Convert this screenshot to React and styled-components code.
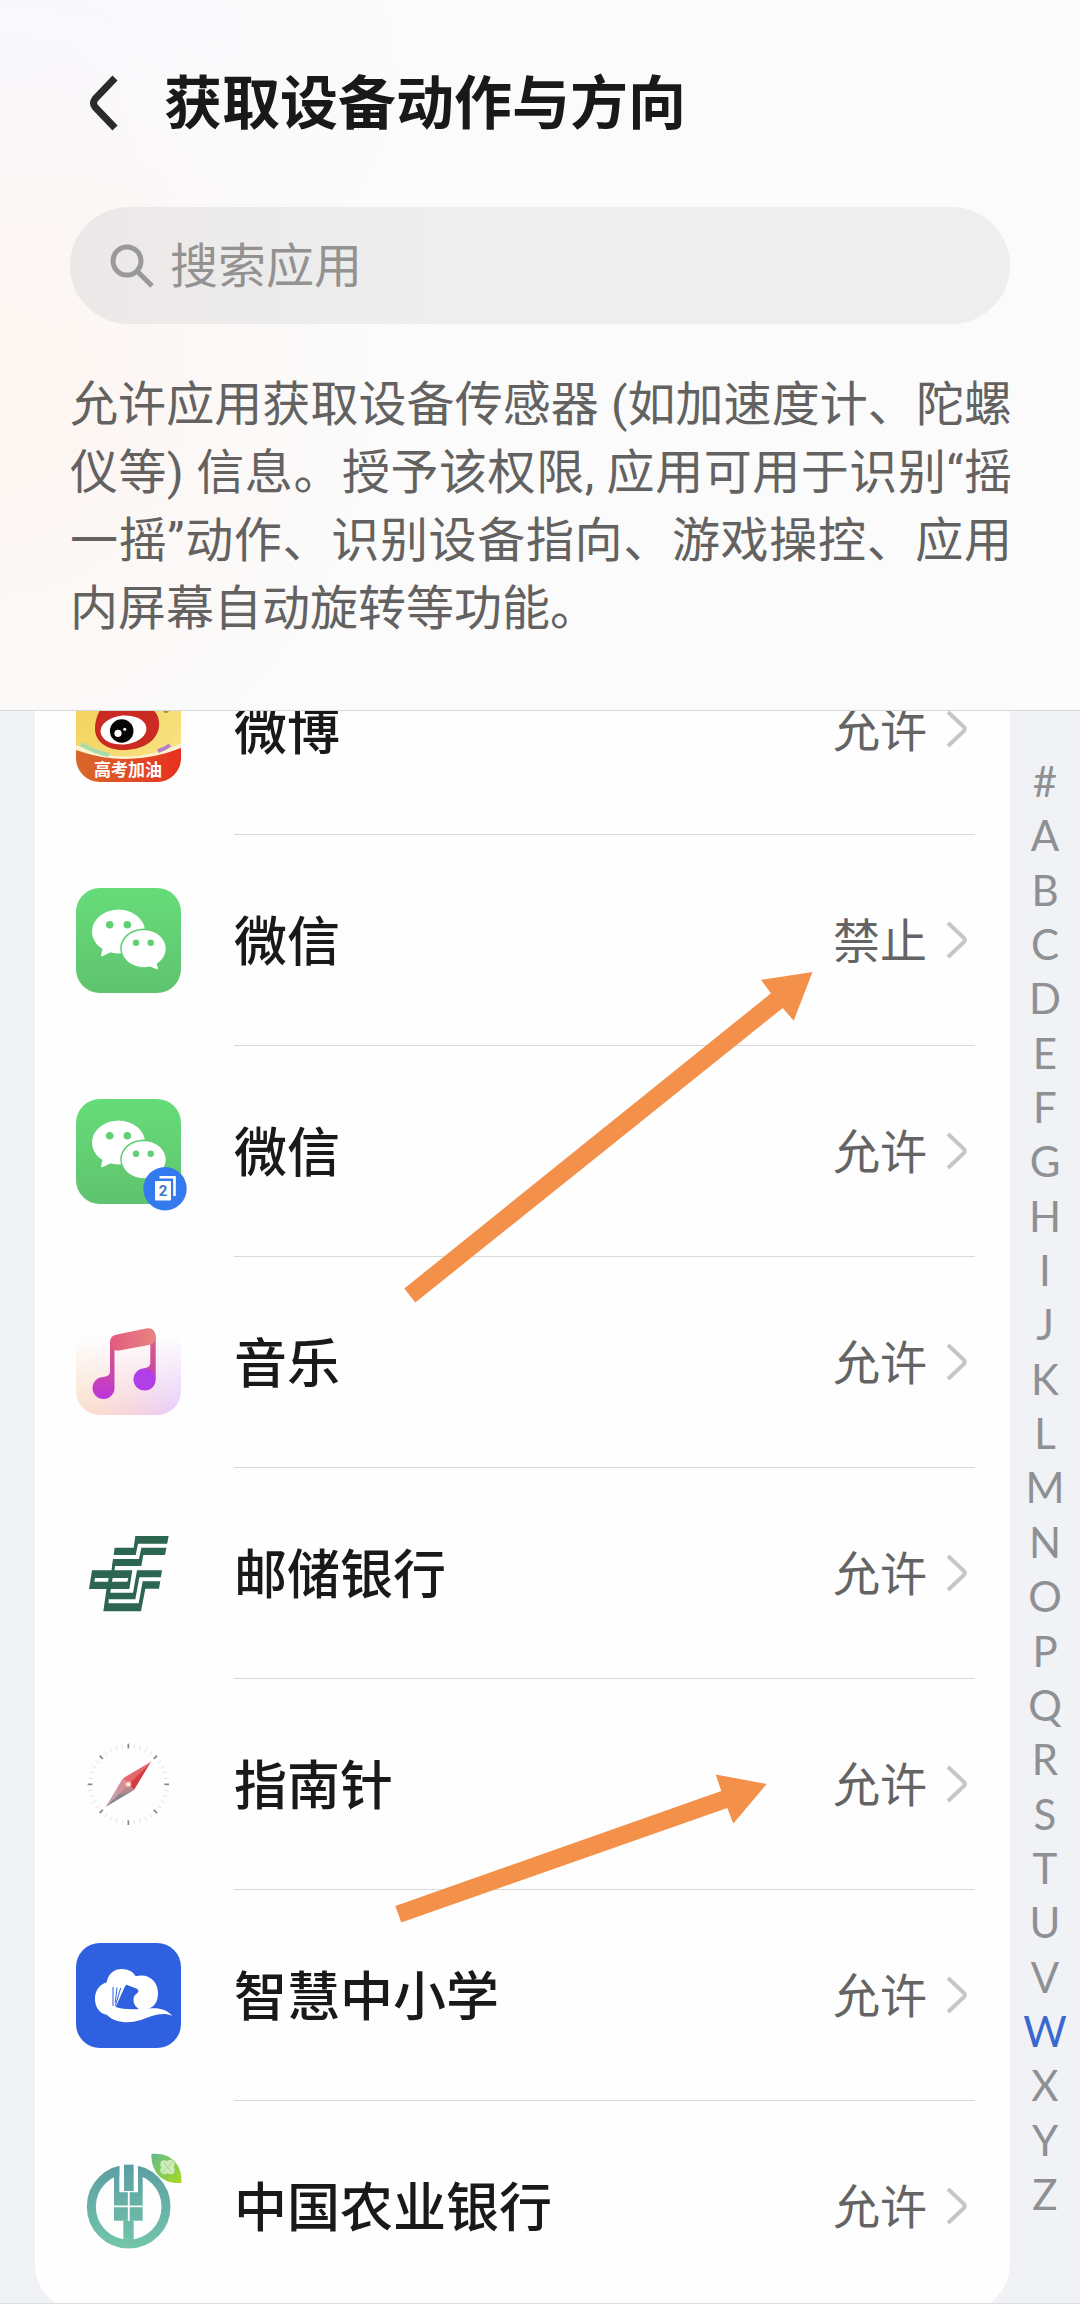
import React, { useLayoutEffect, useRef } from 'react';
import styled, { createGlobalStyle } from 'styled-components';

const GlobalStyle = createGlobalStyle`
  * {
    box-sizing: border-box;
  }

  body {
    margin: 0;
    background: #f0f2f6;
    font-family: Roboto, 'Noto Sans CJK SC', sans-serif;
    color: #191919;
  }
`;

const Page = styled.div`
  display: flex;
  flex-direction: column;
  height: 100vh;
  border-bottom: 1px solid #dcdde0;
`;

const Header = styled.header`
  padding: 64px 68px 67px 70px;
  border-bottom: 1px solid #d6d7d9;
  background:
    radial-gradient(ellipse 380px 420px at 0 55%, #fdf5f1, transparent),
    radial-gradient(ellipse 420px 300px at 0 10%, #f8f8fd, transparent),
    #fbfbfb;
`;

const TitleRow = styled.div`
  display: flex;
  align-items: center;
  gap: 44px;
  height: 78px;
  margin-bottom: 65px;
`;

const BackButton = styled.button`
  display: flex;
  padding: 0 0 0 16px;
  border: none;
  background: none;
  cursor: pointer;
`;

const Title = styled.h1`
  margin: 0;
  padding-top: 2px;
  font-size: 58px;
  line-height: 76px;
  font-weight: 700;
`;

const SearchBox = styled.label`
  display: flex;
  align-items: center;
  gap: 16px;
  height: 117px;
  margin-right: 2px;
  padding: 0 38px;
  border-radius: 59px;
  background: linear-gradient(90deg, #ebe9e8, #eeeeee 40%);
`;

const SearchInput = styled.input`
  flex: 1;
  min-width: 0;
  padding: 2px 0 0;
  border: none;
  outline: none;
  background: none;
  font-family: inherit;
  font-size: 48px;
  line-height: 68px;
  color: #191919;

  &::placeholder {
    color: #949291;
    opacity: 1;
  }
`;

const Description = styled.p`
  margin: 47px 0 0;
  font-size: 48px;
  line-height: 68px;
  color: #636261;
  text-align: justify;
`;

const Body = styled.main`
  display: flex;
  flex: 1;
  min-height: 0;
  padding-left: 35px;
`;

const ListScroll = styled.div`
  flex: 1;
  min-width: 0;
  overflow-y: auto;
  scrollbar-width: none;
`;

const AppList = styled.ul`
  position: relative;
  margin: 0;
  padding: 0 35px 0 41px;
  list-style: none;
  border-radius: 48px;
  background: #fefefe;
`;

const AppRow = styled.li`
  display: flex;
  align-items: center;
  height: 211px;
`;

const RowButton = styled.button`
  display: flex;
  align-items: center;
  gap: 53px;
  width: 100%;
  height: 100%;
  padding: 0;
  border: none;
  background: none;
  font-family: inherit;
  text-align: left;
  color: inherit;
  cursor: pointer;
`;

const RowContent = styled.span`
  display: flex;
  flex: 1;
  align-items: center;
  height: 100%;
  border-bottom: 1px solid ${({ $last }) => ($last ? 'transparent' : '#d9d9d9')};
`;

const AppName = styled.span`
  flex: 1;
  padding-top: 6px;
  font-size: 53px;
  line-height: 76px;
  font-weight: 500;
`;

const Status = styled.span`
  margin-right: 19px;
  padding-top: 3px;
  font-size: 47px;
  line-height: 68px;
  color: #646464;
`;

const RowArrow = styled.svg`
  margin-right: 7px;
`;

const AppIcon = styled.svg`
  flex: none;
  width: 105px;
  height: 105px;
  overflow: visible;
`;

const Pointer = styled.svg`
  position: absolute;
  left: ${({ $left }) => $left}px;
  top: ${({ $top }) => $top}px;
  pointer-events: none;
`;

const LetterIndex = styled.nav`
  display: flex;
  flex-direction: column;
  justify-content: space-between;
  align-items: center;
  width: 70px;
  padding: 43px 0 82px;
`;

const Letter = styled.a`
  font-family: Lato, sans-serif;
  font-size: 42px;
  line-height: 54px;
  color: ${({ $active }) => ($active ? '#3a68d0' : '#8f9093')};
  text-decoration: none;
`;

const WeiboIcon = () => (
  <AppIcon viewBox="0 0 105 105">
    <defs>
      <linearGradient id="weiboSky" x1="0" y1="0" x2="1" y2="1">
        <stop offset="0" stopColor="#f3cf55" />
        <stop offset="1" stopColor="#f8e58a" />
      </linearGradient>
      <linearGradient id="weiboBand" x1="0" y1="0" x2="1" y2="0">
        <stop offset="0" stopColor="#d8692c" />
        <stop offset="1" stopColor="#e8301f" />
      </linearGradient>
      <clipPath id="weiboClip">
        <rect width="105" height="105" rx="24" />
      </clipPath>
    </defs>
    <g clipPath="url(#weiboClip)">
      <rect width="105" height="105" fill="url(#weiboSky)" />
      <path d="M30 20C46 10 60 18 70 30C80 32 84 40 83 50C81 64 67 73 47 73C30 73 19 64 19 52C19 42 23 34 26 30Z" fill="#cb2a22" />
      <ellipse cx="47.500" cy="53" rx="23" ry="14.500" fill="#fff" transform="rotate(-5 47.500 53)" />
      <circle cx="45.700" cy="54" r="11.800" fill="#050505" />
      <circle cx="42" cy="56.300" r="3.600" fill="#fff" />
      <circle cx="48.700" cy="52.300" r="1.500" fill="#fff" />
      <circle cx="90" cy="33" r="3" fill="#a98a4a" />
      <path d="M0 68Q52 92 105 66V84H0Z" fill="#fdf1cf" />
      <path d="M5 67Q18 75 33 78" fill="none" stroke="#a7dcae" strokeWidth="4" />
      <path d="M82 74Q89 72 94 68" fill="none" stroke="#b27fc9" strokeWidth="4" />
      <path d="M0 73Q52 92 105 71V105H0Z" fill="url(#weiboBand)" />
      <text x="52" y="99" fontSize="17" fontWeight="700" fill="#fff" textAnchor="middle">高考加油</text>
    </g>
  </AppIcon>
);

const WechatIcon = ({ clone }) => (
  <AppIcon viewBox="0 0 105 105">
    <defs>
      <linearGradient id="wechatGreen" x1="0" y1="0" x2="0" y2="1">
        <stop offset="0" stopColor="#66dc79" />
        <stop offset="1" stopColor="#60c36f" />
      </linearGradient>
    </defs>
    <rect width="105" height="105" rx="24" fill="url(#wechatGreen)" />
    <ellipse cx="42.500" cy="43.500" rx="26.500" ry="22" fill="#fff" />
    <path d="M27 59L25 67Q25 69 27 68L37 63Z" fill="#fff" />
    <circle cx="33.700" cy="36.700" r="3.800" fill="#62cf74" />
    <circle cx="51.300" cy="36.700" r="3.800" fill="#62cf74" />
    <ellipse cx="67.700" cy="60.500" rx="23.500" ry="20" fill="#62cf74" />
    <ellipse cx="67.700" cy="60.700" rx="22" ry="18.500" fill="#fff" />
    <path d="M80 74L82 80Q82 82 80 81L71 77Z" fill="#fff" />
    <circle cx="60" cy="54.700" r="3.200" fill="#62cf74" />
    <circle cx="74.700" cy="54.700" r="3.200" fill="#62cf74" />
    {clone && (
      <g>
        <circle cx="89" cy="89.700" r="21.700" fill="#3479ee" />
        <path d="M83.500 78.200H98.500V97" fill="none" stroke="#fff" strokeWidth="2.600" />
        <rect x="79" y="82" width="16" height="19.500" rx="1" fill="#fff" />
        <text x="87" y="97" fontSize="15" fontWeight="700" fill="#3f78c8" textAnchor="middle">2</text>
      </g>
    )}
  </AppIcon>
);

const MusicIcon = () => (
  <AppIcon viewBox="0 0 105 105">
    <defs>
      <linearGradient id="musicBase" x1="0" y1="0" x2="1" y2="0">
        <stop offset="0" stopColor="#fae0c8" />
        <stop offset="0.5" stopColor="#f8d3da" />
        <stop offset="1" stopColor="#e6cbfb" />
      </linearGradient>
      <linearGradient id="musicFade" x1="0" y1="0" x2="0" y2="1">
        <stop offset="0.25" stopColor="#fefefe" />
        <stop offset="1" stopColor="#fefefe" stopOpacity="0" />
      </linearGradient>
      <linearGradient id="musicNote" gradientUnits="userSpaceOnUse" x1="0" y1="28" x2="0" y2="88">
        <stop offset="0" stopColor="#df5c82" />
        <stop offset="0.5" stopColor="#cd4ba0" />
        <stop offset="1" stopColor="#bd34dc" />
      </linearGradient>
      <linearGradient id="musicBeam" x1="0" y1="0" x2="1" y2="0">
        <stop offset="0" stopColor="#e25b80" />
        <stop offset="1" stopColor="#e88580" />
      </linearGradient>
    </defs>
    <rect width="105" height="105" rx="24" fill="url(#musicBase)" />
    <rect x="-1" y="-1" width="107" height="107" fill="url(#musicFade)" />
    <path d="M34 32H38.500V78A11 11 0 1 1 27.500 67Q34 66 34 62Z" fill="url(#musicNote)" />
    <path d="M74.300 25H79.700V69A11 11 0 1 1 68 58.500Q74.300 57 74.300 53Z" fill="url(#musicNote)" />
    <circle cx="68.300" cy="69.300" r="10.800" fill="#b13fe9" />
    <path d="M34 33C34 28 36 25.500 41 24.500L70 18.500C76 17.500 79.700 21 79.700 27C79.700 32 77 34 73 35L43 40.500C37 41 34 38 34 33Z" fill="url(#musicBeam)" />
  </AppIcon>
);

const PostBankIcon = () => (
  <AppIcon viewBox="108 60 315 315">
    <g fill="#2c6650">
      <path d="M286 105H386L375 162H310L304 195H216L224 140H281Z" />
      <path fillRule="evenodd" d="M156 208H277L268 264H147ZM165 231L163 242H204L206 231ZM218 231L216 242H262L265 231Z" />
      <path d="M217 190H226L223 212H214Z" />
      <path d="M291 208H366L357 263H316L303 331H190L200 260H213L211 275H279Z" />
    </g>
    <g fill="none" stroke="#fefefe" strokeWidth="12">
      <path d="M392 134.500H299L292 168H218" />
      <path d="M370 235H303L291 301H206" />
    </g>
  </AppIcon>
);

const CompassIcon = () => {
  const ticks = Array.from({ length: 40 }, (_, i) => i * 9);
  return (
    <AppIcon viewBox="-157 -157 315 315">
      {ticks.map((angle) => {
        const major = angle % 45 === 0;
        return (
          <path
            key={angle}
            d="M0 -122V-108"
            stroke={major ? '#858585' : '#e6e6e6'}
            strokeWidth={major ? 5 : 3}
            transform={`rotate(${angle})`}
          />
        );
      })}
      <path d="M68 -68L-16 -18L0 0Z" fill="#e3686b" />
      <path d="M68 -68L17 17L0 0Z" fill="#d43a41" />
      <path d="M-68 68L-16 -18L0 0Z" fill="#c99ca5" />
      <path d="M-68 68L17 17L0 0Z" fill="#87868c" />
      <path d="M-16 -18L0 0L17 17L-22 32L-34 10Z" fill="#dc8790" opacity="0.6" />
      <circle r="9" fill="#f6b49c" />
      <circle r="5" fill="#fff3df" />
    </AppIcon>
  );
};

const SmartEduIcon = () => (
  <AppIcon viewBox="108 125 315 315">
    <rect x="108" y="125" width="315" height="315" rx="72" fill="#2f60e0" />
    <path d="M200 340C176 335 165 315 165 292C165 266 180 249 200 243C205 217 222 203 245 203C265 203 280 212 287 225C325 215 354 240 354 275C354 300 345 315 325 322C352 318 380 323 397 344C365 330 335 345 300 357C265 367 225 365 200 340Z" fill="#fff" />
    <path d="M259 250L291 262Q299 269 292 275Q277 284 281 303Q285 317 297 323Q255 326 227 317L251 264Q254 255 259 250Z" fill="#2f60e0" />
    <path d="M219 257V314M231 259L226 304M242 260L226 314" fill="none" stroke="#2f60e0" strokeWidth="3" />
  </AppIcon>
);

const AgriBankIcon = () => (
  <AppIcon viewBox="108 757 315 315">
    <defs>
      <linearGradient id="agriGreen" gradientUnits="userSpaceOnUse" x1="0" y1="790" x2="0" y2="1040">
        <stop offset="0" stopColor="#5c9ea3" />
        <stop offset="1" stopColor="#72c6aa" />
      </linearGradient>
      <linearGradient id="agriLeaf" x1="0" y1="0" x2="1" y2="1">
        <stop offset="0" stopColor="#62bc8c" />
        <stop offset="1" stopColor="#a6d81f" />
      </linearGradient>
    </defs>
    <circle cx="266" cy="915" r="112" fill="none" stroke="url(#agriGreen)" strokeWidth="27" />
    <path d="M238 780H295V880H238Z" fill="#fefefe" />
    <g fill="url(#agriGreen)">
      <path d="M222 800L238 794V872H264V957H222Z" />
      <path d="M308 800L294 794V872H268V957H308Z" />
      <path d="M252 789H281V868H252Z" />
      <path d="M250 957H281V1035H250Z" />
    </g>
    <path d="M222 914H308M266 868V957" stroke="#fefefe" strokeWidth="5" />
    <path d="M334 757C390 752 427 785 424 844C370 848 333 815 334 757Z" fill="url(#agriLeaf)" />
    <g fill="#cdebbd">
      <circle cx="373" cy="788" r="12" />
      <circle cx="392" cy="786" r="12" />
      <circle cx="373" cy="806" r="12" />
      <circle cx="392" cy="806" r="12" />
    </g>
    <path d="M362 818L403 776M371 784L393 809" stroke="#8fcb6b" strokeWidth="2" />
  </AppIcon>
);

const apps = [
  { id: 'weibo', name: '微博', status: '允许', icon: <WeiboIcon /> },
  { id: 'wechat', name: '微信', status: '禁止', icon: <WechatIcon /> },
  { id: 'wechat-clone', name: '微信', status: '允许', icon: <WechatIcon clone /> },
  { id: 'music', name: '音乐', status: '允许', icon: <MusicIcon /> },
  { id: 'psbc', name: '邮储银行', status: '允许', icon: <PostBankIcon /> },
  { id: 'compass', name: '指南针', status: '允许', icon: <CompassIcon /> },
  { id: 'smartedu', name: '智慧中小学', status: '允许', icon: <SmartEduIcon /> },
  { id: 'abc', name: '中国农业银行', status: '允许', icon: <AgriBankIcon /> },
];

const letters = '#ABCDEFGHIJKLMNOPQRSTUVWXYZ'.split('');

const INITIAL_SCROLL = 87;

const App = () => {
  const scrollRef = useRef(null);

  useLayoutEffect(() => {
    scrollRef.current.scrollTop = INITIAL_SCROLL;
  }, []);

  return (
    <Page>
      <GlobalStyle />
      <Header>
        <TitleRow>
          <BackButton aria-label="返回">
            <svg width="34" height="56" viewBox="0 0 34 56" fill="none" stroke="#2b2b2b" strokeWidth="7" strokeLinejoin="round">
              <path d="M29 3L9 24Q6 28 9 32L29 53" />
            </svg>
          </BackButton>
          <Title>获取设备动作与方向</Title>
        </TitleRow>
        <SearchBox>
          <svg width="46" height="46" viewBox="0 0 46 46" fill="none" stroke="#9b9998" strokeWidth="5">
            <circle cx="19" cy="18" r="14" />
            <path d="M29 28L44 43" />
          </svg>
          <SearchInput type="search" placeholder="搜索应用" aria-label="搜索应用" />
        </SearchBox>
        <Description>
          允许应用获取设备传感器 (如加速度计、陀螺仪等) 信息。授予该权限, 应用可用于识别“摇一摇”动作、识别设备指向、游戏操控、应用内屏幕自动旋转等功能。
        </Description>
      </Header>

      <Body>
        <ListScroll ref={scrollRef}>
          <AppList>
            {apps.map((app, index) => (
              <AppRow key={app.id}>
                <RowButton>
                  {app.icon}
                  <RowContent $last={index === apps.length - 1}>
                    <AppName>{app.name}</AppName>
                    <Status>{app.status}</Status>
                    <RowArrow width="22" height="40" viewBox="0 0 22 40" fill="none" stroke="#c6c6c6" strokeWidth="4">
                      <path d="M2 3L18 18Q19.500 20 18 22L2 37" />
                    </RowArrow>
                  </RowContent>
                </RowButton>
              </AppRow>
            ))}
            <Pointer $left={365} $top={346} width="420" height="336" fill="#f3914b">
              <path d="M4.300 318.500L371 23.300L361 10L412.500 2L393.700 50.700L382.700 38L15.300 332.500Z" />
            </Pointer>
            <Pointer $left={355} $top={1146} width="380" height="156" fill="#f3914b">
              <path d="M5.300 136L331.300 21L325.700 4.500L376.700 14L343.300 53.500L337.300 38L11.300 152.500Z" />
            </Pointer>
          </AppList>
        </ListScroll>
        <LetterIndex aria-label="字母索引">
          {letters.map((letter) => (
            <Letter key={letter} href={`#${letter}`} $active={letter === 'W'}>
              {letter}
            </Letter>
          ))}
        </LetterIndex>
      </Body>
    </Page>
  );
};

export default App;
